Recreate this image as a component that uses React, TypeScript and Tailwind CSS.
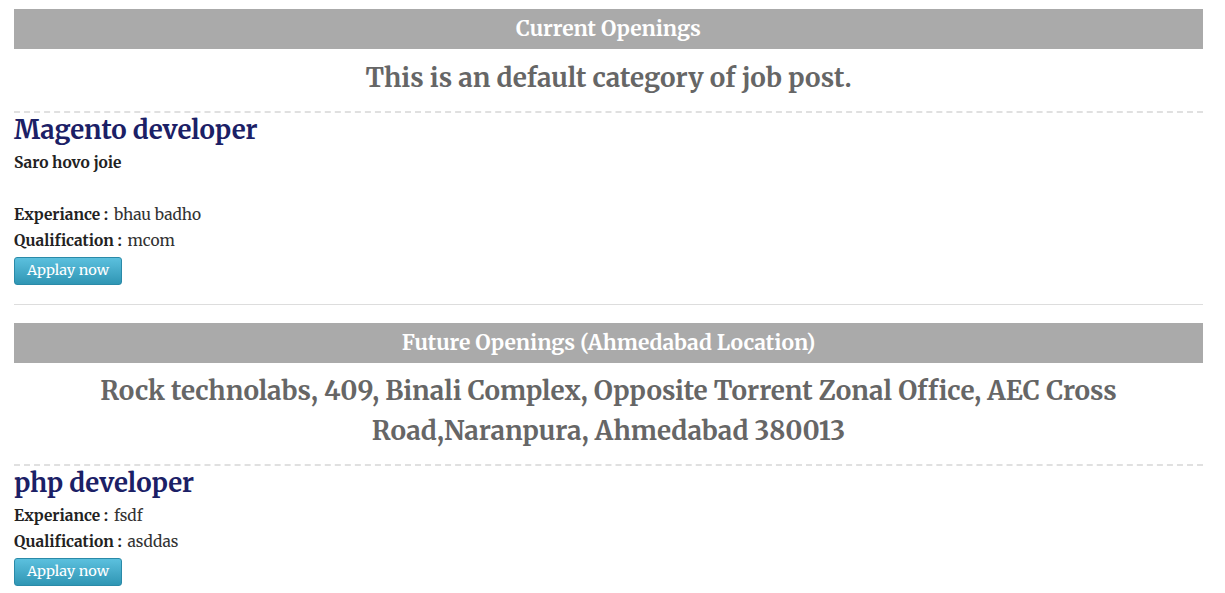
const serif = "font-['Merriweather','DejaVu_Serif',serif]"

function JobRow({ title, exp, qual, note }: { title: string; exp: string; qual: string; note?: string }) {
  return (
    <div>
      <h3 className="text-[25.75px] font-bold leading-[34px] text-[#1b2066]">{title}</h3>
      {note ? (
        <>
          <p className="text-[15.5px] font-bold text-[#222] leading-[22px] mt-[5px]">{note}</p>
          <div className="h-[28px]" />
        </>
      ) : (
        <div className="h-[3px]" />
      )}
      <p className="text-[15.5px] leading-[26px] text-[#222]">
        <b>Experiance :</b> <span className="ml-[2px] text-[#333]">{exp}</span>
      </p>
      <p className="text-[15.5px] leading-[26px] text-[#222]">
        <b>Qualification :</b> <span className="ml-[2px] text-[#333]">{qual}</span>
      </p>
      <button className="mt-[3px] h-[28px] w-[108px] rounded-[3px] border border-[#2a8aa8] bg-gradient-to-b from-[#5bc0de] to-[#2f96b4] text-[14.5px] text-white">
        Applay now
      </button>
    </div>
  )
}

export default function App() {
  return (
    <div className={`${serif} bg-white pl-[14px] pr-[22px] pt-[9px]`}>
      <div className="h-[40px] bg-[#aaaaaa] flex items-center justify-center text-white font-bold text-[21px]">
        Current Openings
      </div>
      <p className="text-center text-[26px] leading-[58px] text-[#666] font-bold">
        This is an default category of job post.
      </p>
      <div className="border-t-2 border-dashed border-[#e0e0e0] mt-[4px]" />
      <JobRow title="Magento developer" note="Saro hovo joie" exp="bhau badho" qual="mcom" />
      <div className="border-t border-[#ddd] mt-[19px]" />
      <div className="mt-[18px] h-[40px] bg-[#aaaaaa] flex items-center justify-center text-white font-bold text-[21px]">
        Future Openings (Ahmedabad Location)
      </div>
      <p className="text-center text-[26px] leading-[40px] text-[#666] font-bold mt-[8px] px-[40px]">
        Rock technolabs, 409, Binali Complex, Opposite Torrent Zonal Office, AEC Cross Road,Naranpura, Ahmedabad 380013
      </p>
      <div className="border-t-2 border-dashed border-[#e0e0e0] mt-[13px]" />
      <JobRow title="php developer" exp="fsdf" qual="asddas" />
    </div>
  )
}
